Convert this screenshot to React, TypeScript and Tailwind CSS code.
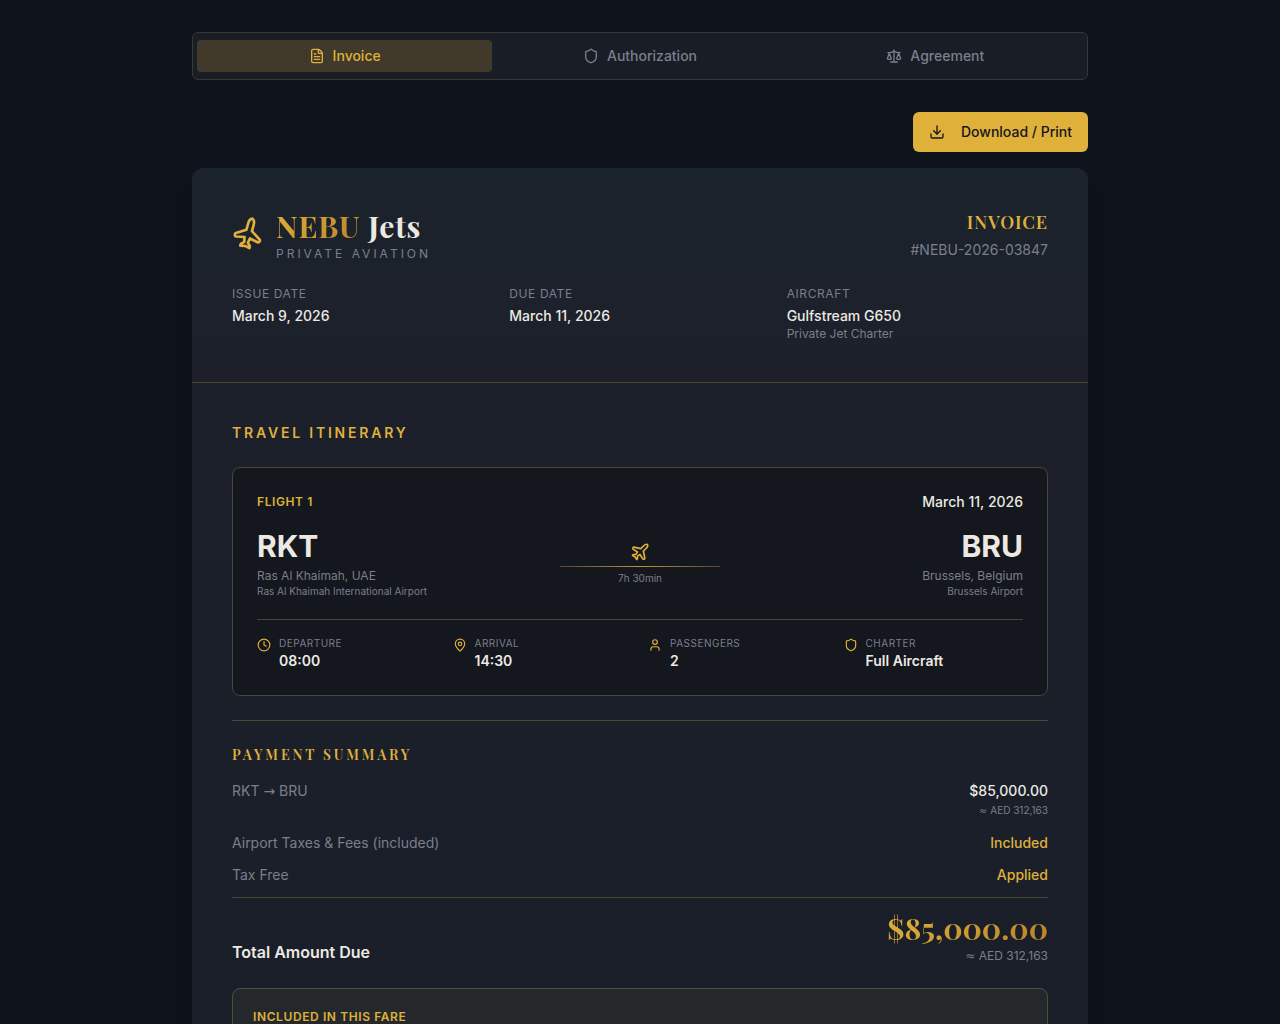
import { useState } from "react";
import {
  Clock,
  Download,
  FileText,
  MapPin,
  Plane,
  Scale,
  Shield,
  User,
  type LucideIcon,
} from "lucide-react";

type TabId = "invoice" | "authorization" | "agreement";

const tabs: { id: TabId; label: string; icon: LucideIcon }[] = [
  { id: "invoice", label: "Invoice", icon: FileText },
  { id: "authorization", label: "Authorization", icon: Shield },
  { id: "agreement", label: "Agreement", icon: Scale },
];

const flightDetails: { label: string; value: string; icon: LucideIcon }[] = [
  { label: "Departure", value: "08:00", icon: Clock },
  { label: "Arrival", value: "14:30", icon: MapPin },
  { label: "Passengers", value: "2", icon: User },
  { label: "Charter", value: "Full Aircraft", icon: Shield },
];

const serif = "font-['Playfair_Display','Liberation_Serif',serif]";
const symbol = "leading-none font-['DejaVu_Sans',sans-serif]";
const goldText =
  "bg-linear-135 from-[#dfb13b] to-[#b98228] bg-clip-text text-transparent";

function TabBar({ active, onChange }: { active: TabId; onChange: (id: TabId) => void }) {
  return (
    <div
      role="tablist"
      className="grid h-12 grid-cols-3 items-center rounded-md border border-[#3a3931] bg-[#191d26] p-1"
    >
      {tabs.map(({ id, label, icon: Icon }) => (
        <button
          key={id}
          type="button"
          role="tab"
          aria-selected={active === id}
          onClick={() => onChange(id)}
          className={`flex h-8 items-center justify-center gap-2 rounded-sm text-sm font-medium ${
            active === id ? "bg-[#41392a] text-[#dfb13b]" : "text-[#7a7f8b]"
          }`}
        >
          <Icon className="size-4" />
          {label}
        </button>
      ))}
    </div>
  );
}

function HeaderField({ label, value, note }: { label: string; value: string; note?: string }) {
  return (
    <div>
      <p className="mb-1 text-xs tracking-wider text-[#7a7f8b] uppercase">{label}</p>
      <p className="text-sm font-medium">{value}</p>
      {note ? <p className="text-xs text-[#7a7f8b]">{note}</p> : null}
    </div>
  );
}

function InvoiceHeader() {
  return (
    <header className="border-b border-[#49463a] bg-linear-to-b from-[#1b232d] to-[#1d202b] p-10">
      <div className="mb-6 flex items-start justify-between">
        <div className="flex items-center gap-3">
          <Plane className="size-8 -rotate-30 text-[#dfb13b]" />
          <div>
            <h1 className={`text-3xl font-bold tracking-wide ${serif}`}>
              <span className={goldText}>NEBU</span> Jets
            </h1>
            <p className="mt-0.5 text-xs tracking-[3px] text-[#7a7f8b] uppercase">
              Private Aviation
            </p>
          </div>
        </div>
        <div className="text-right">
          <p className={`text-lg font-semibold tracking-wider text-[#dfb13b] ${serif}`}>INVOICE</p>
          <p className="mt-1 text-sm text-[#7a7f8b]">#NEBU-2026-03847</p>
        </div>
      </div>
      <div className="grid grid-cols-3 gap-4">
        <HeaderField label="Issue Date" value="March 9, 2026" />
        <HeaderField label="Due Date" value="March 11, 2026" />
        <HeaderField label="Aircraft" value="Gulfstream G650" note="Private Jet Charter" />
      </div>
    </header>
  );
}

function FlightCard() {
  return (
    <article className="rounded-lg border border-[#49463a] bg-[#14171e] p-6">
      <div className="mb-4 flex items-center justify-between">
        <span className="text-xs font-semibold tracking-wider text-[#dfb13b] uppercase">
          Flight 1
        </span>
        <span className="text-sm font-medium">March 11, 2026</span>
      </div>

      <div className="flex items-center justify-between">
        <div className="flex-1">
          <p className="text-3xl font-bold">RKT</p>
          <p className="mt-1 text-xs text-[#7a7f8b]">Ras Al Khaimah, UAE</p>
          <p className="text-[10px] text-[#7a7f8b]">Ras Al Khaimah International Airport</p>
        </div>
        <div className="flex w-40 flex-col items-center">
          <Plane className="size-5 text-[#dfb13b]" />
          <div className="my-1 h-px w-full bg-linear-to-r from-[#5a4c2c] via-[#b8933a] to-[#5a4c2c]" />
          <span className="text-[10px] text-[#7a7f8b]">7h 30min</span>
        </div>
        <div className="flex-1 text-right">
          <p className="text-3xl font-bold">BRU</p>
          <p className="mt-1 text-xs text-[#7a7f8b]">Brussels, Belgium</p>
          <p className="text-[10px] text-[#7a7f8b]">Brussels Airport</p>
        </div>
      </div>

      <div className="mt-5 grid grid-cols-4 gap-4 border-t border-[#49463a] pt-4">
        {flightDetails.map(({ label, value, icon: Icon }) => (
          <div key={label} className="flex items-start gap-2">
            <Icon className="mt-0.5 size-3.5 text-[#dfb13b]" />
            <div>
              <p className="text-[10px] tracking-wider text-[#7a7f8b] uppercase">{label}</p>
              <p className="text-sm font-semibold">{value}</p>
            </div>
          </div>
        ))}
      </div>
    </article>
  );
}

function PaymentSummary() {
  return (
    <section className="mt-6 border-t border-[#49463a] pt-6">
      <h2
        className={`mb-4 text-sm font-semibold tracking-[0.2em] text-[#dfb13b] uppercase ${serif}`}
      >
        Payment Summary
      </h2>
      <dl className="space-y-3 text-sm">
        <div className="flex items-start justify-between">
          <dt className="text-[#7a7f8b]">
            RKT <span className={symbol}>→</span> BRU
          </dt>
          <dd className="text-right font-medium">
            $85,000.00
            <p className="mt-0.5 mb-1 text-[10px] font-normal text-[#7a7f8b]">
              <span className={symbol}>≈</span> AED 312,163
            </p>
          </dd>
        </div>
        <div className="flex justify-between">
          <dt className="text-[#7a7f8b]">Airport Taxes &amp; Fees (included)</dt>
          <dd className="font-medium text-[#dfb13b]">Included</dd>
        </div>
        <div className="flex justify-between">
          <dt className="text-[#7a7f8b]">Tax Free</dt>
          <dd className="font-medium text-[#dfb13b]">Applied</dd>
        </div>
        <div className="flex items-end justify-between border-t border-[#49463a] pt-3">
          <dt className="text-base font-semibold">Total Amount Due</dt>
          <dd className="text-right">
            <p className={`text-3xl font-bold ${serif} ${goldText}`}>$85,000.00</p>
            <p className="mt-0.5 text-xs text-[#7a7f8b]">
              <span className={symbol}>≈</span> AED 312,163
            </p>
          </dd>
        </div>
      </dl>

      <div className="mt-6 rounded-lg border border-[#4e4e36] bg-[#25282b] p-5">
        <h3 className="text-xs font-semibold tracking-wider text-[#dfb13b] uppercase">
          Included in this fare
        </h3>
      </div>
    </section>
  );
}

export default function App() {
  const [tab, setTab] = useState<TabId>("invoice");

  return (
    <div className="min-h-screen bg-[#0e121a] px-4 py-8 font-['Inter',sans-serif] text-[#ece9e3]">
      <main className="mx-auto max-w-4xl">
        <TabBar active={tab} onChange={setTab} />
        <div className="mt-8 mb-4 flex justify-end">
          <button
            type="button"
            onClick={() => window.print()}
            className="flex h-10 items-center gap-4 rounded-md bg-[#dfb13b] px-4 text-sm font-medium text-[#14171e]"
          >
            <Download className="size-4" />
            Download / Print
          </button>
        </div>
        <div className="overflow-hidden rounded-xl bg-linear-to-b from-[#1d202b] to-[#191e29] shadow-xl">
          <InvoiceHeader />
          <div className="p-10">
            <h2 className="mb-6 text-sm font-semibold tracking-[0.2em] text-[#dfb13b] uppercase">
              Travel Itinerary
            </h2>
            <FlightCard />
            <PaymentSummary />
          </div>
        </div>
      </main>
    </div>
  );
}
